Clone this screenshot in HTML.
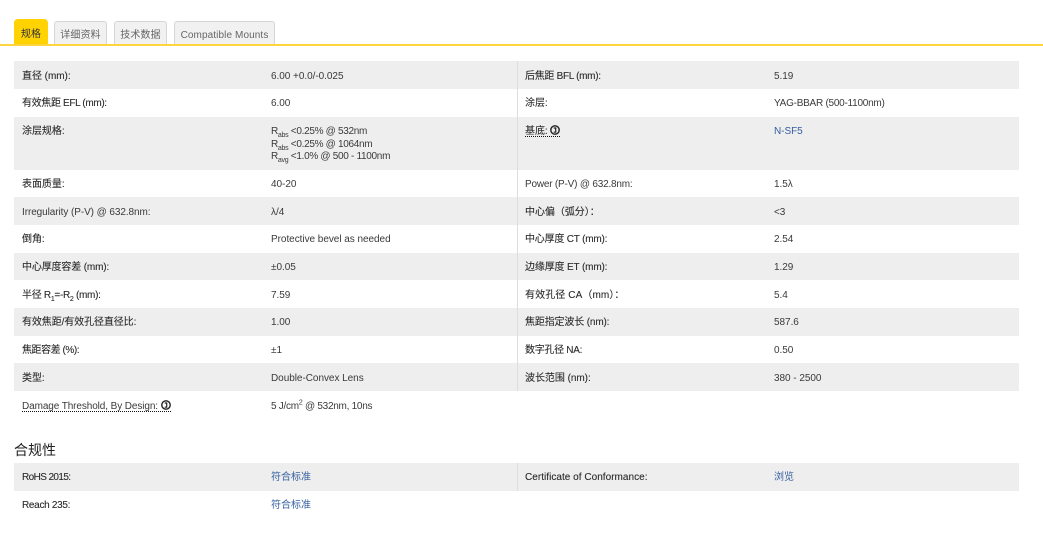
<!DOCTYPE html>
<html lang="zh"><head><meta charset="utf-8"><style>
html,body{margin:0;padding:0;background:#fff}
body{width:1043px;height:537px;position:relative;overflow:hidden;font-family:"Liberation Sans","Noto Sans CJK SC",sans-serif;font-size:10px;color:#3a3a3a}
.tab{position:absolute;box-sizing:border-box;top:21px;height:24px;background:#f1f1f1;border:1px solid #d6d6d6;border-bottom:0;border-radius:3px 3px 0 0;line-height:28px;text-align:center;color:#666;letter-spacing:.1px}
.on{top:19px;height:26px;background:#ffd200;border:0;color:#333;line-height:31px;border-radius:4px 4px 0 0}
.line{position:absolute;left:0;top:44px;width:1043px;height:2px;background:#ffd53c}
.g{position:absolute;left:14px;width:1005px;background:#eee}
.d{position:absolute;left:517px;width:1px;background:#ddd}
.t{position:absolute;white-space:nowrap;line-height:14px;letter-spacing:-.04px}
.c{color:#2a2a2a;-webkit-text-stroke:.1px #2a2a2a}
.b{color:#345f9f}
sub,sup{font-size:7px;line-height:0}
.u{display:inline-block;height:11px;border-bottom:1px dotted #111}
.i{display:inline-block;width:10px;height:10px;vertical-align:-1px;-webkit-text-stroke:0}
h3{position:absolute;margin:0;left:14px;top:441px;font-size:14px;line-height:18px;font-weight:400;color:#222;font-family:"Noto Sans CJK SC","Liberation Sans",sans-serif}
</style></head><body>
<div class="tab on" style="left:14px;width:34px">规格</div>
<div class="tab" style="left:54px;width:53px">详细资料</div>
<div class="tab" style="left:114px;width:53px">技术数据</div>
<div class="tab" style="left:174px;width:101px">Compatible Mounts</div>
<div class="line"></div>

<div class="g" style="top:61px;height:28px"></div>
<div class="g" style="top:117px;height:53px"></div>
<div class="g" style="top:197px;height:28px"></div>
<div class="g" style="top:253px;height:27px"></div>
<div class="g" style="top:308px;height:28px"></div>
<div class="g" style="top:363px;height:28px"></div>
<div class="g" style="top:463px;height:28px"></div>
<div class="d" style="top:61px;height:330px"></div>
<div class="d" style="top:463px;height:28px"></div>

<div class="t c" style="left:22px;top:70px">直径 (mm):</div>
<div class="t" style="left:271px;top:70px">6.00 +0.0/-0.025</div>
<div class="t c" style="left:525px;top:70px;letter-spacing:-.3px">后焦距 BFL (mm):</div>
<div class="t" style="left:774px;top:70px">5.19</div>

<div class="t c" style="left:22px;top:97px;letter-spacing:-.35px">有效焦距 EFL (mm):</div>
<div class="t" style="left:271px;top:97px">6.00</div>
<div class="t c" style="left:525px;top:97px">涂层:</div>
<div class="t" style="left:774px;top:97px;letter-spacing:-.25px">YAG-BBAR (500-1100nm)</div>

<div class="t c" style="left:22px;top:125px">涂层规格:</div>
<div class="t" style="left:271px;top:126px;line-height:12.5px;letter-spacing:-.3px">R<sub>abs</sub> &lt;0.25% @ 532nm<br>R<sub>abs</sub> &lt;0.25% @ 1064nm<br>R<sub>avg</sub> &lt;1.0% @ 500 - 1100nm</div>
<div class="t c" style="left:525px;top:125px"><span class="u">基底: <svg class="i" viewBox="0 0 10 10"><circle cx="5" cy="5" r="4.2" fill="none" stroke="#222" stroke-width="1.4"/><path d="M3.7 3h2v4.2M3.7 7.2h2.6" fill="none" stroke="#222" stroke-width="1.2"/></svg></span></div>
<div class="t b" style="left:774px;top:125px">N-SF5</div>

<div class="t c" style="left:22px;top:178px">表面质量:</div>
<div class="t" style="left:271px;top:178px">40-20</div>
<div class="t" style="left:525px;top:178px;letter-spacing:-.2px">Power (P-V) @ 632.8nm:</div>
<div class="t" style="left:774px;top:178px">1.5λ</div>

<div class="t" style="left:22px;top:206px;letter-spacing:-.08px">Irregularity (P-V) @ 632.8nm:</div>
<div class="t" style="left:271px;top:206px">λ/4</div>
<div class="t c" style="left:525px;top:206px">中心偏（弧分）：</div>
<div class="t" style="left:774px;top:206px">&lt;3</div>

<div class="t c" style="left:22px;top:233px">倒角:</div>
<div class="t" style="left:271px;top:233px">Protective bevel as needed</div>
<div class="t c" style="left:525px;top:233px;letter-spacing:-.2px">中心厚度 CT (mm):</div>
<div class="t" style="left:774px;top:233px">2.54</div>

<div class="t c" style="left:22px;top:261px;letter-spacing:-.15px">中心厚度容差 (mm):</div>
<div class="t" style="left:271px;top:261px">±0.05</div>
<div class="t c" style="left:525px;top:261px;letter-spacing:-.15px">边缘厚度 ET (mm):</div>
<div class="t" style="left:774px;top:261px">1.29</div>

<div class="t c" style="left:22px;top:289px;letter-spacing:-.3px">半径 R<sub>1</sub>=-R<sub>2</sub> (mm):</div>
<div class="t" style="left:271px;top:289px">7.59</div>
<div class="t c" style="left:525px;top:289px;letter-spacing:.1px">有效孔径 CA（mm）：</div>
<div class="t" style="left:774px;top:289px">5.4</div>

<div class="t c" style="left:22px;top:316px;letter-spacing:-.1px">有效焦距/有效孔径直径比:</div>
<div class="t" style="left:271px;top:316px">1.00</div>
<div class="t c" style="left:525px;top:316px;letter-spacing:-.15px">焦距指定波长 (nm):</div>
<div class="t" style="left:774px;top:316px">587.6</div>

<div class="t c" style="left:22px;top:344px;letter-spacing:-.45px">焦距容差 (%):</div>
<div class="t" style="left:271px;top:344px">±1</div>
<div class="t c" style="left:525px;top:344px;letter-spacing:-.3px">数字孔径 NA:</div>
<div class="t" style="left:774px;top:344px">0.50</div>

<div class="t c" style="left:22px;top:372px">类型:</div>
<div class="t" style="left:271px;top:372px">Double-Convex Lens</div>
<div class="t c" style="left:525px;top:372px">波长范围 (nm):</div>
<div class="t" style="left:774px;top:372px">380 - 2500</div>

<div class="t" style="left:22px;top:400px;letter-spacing:-.1px"><span class="u">Damage Threshold, By Design: <svg class="i" viewBox="0 0 10 10"><circle cx="5" cy="5" r="4.2" fill="none" stroke="#222" stroke-width="1.4"/><path d="M3.7 3h2v4.2M3.7 7.2h2.6" fill="none" stroke="#222" stroke-width="1.2"/></svg></span></div>
<div class="t" style="left:271px;top:400px;letter-spacing:-.27px">5 J/cm<sup>2</sup> @ 532nm, 10ns</div>

<h3>合规性</h3>

<div class="t c" style="left:22px;top:471px;letter-spacing:-.6px">RoHS 2015:</div>
<div class="t b" style="left:271px;top:471px;letter-spacing:0">符合标准</div>
<div class="t c" style="left:525px;top:471px;letter-spacing:.03px">Certificate of Conformance:</div>
<div class="t b" style="left:774px;top:471px;letter-spacing:0">浏览</div>
<div class="t c" style="left:22px;top:499px;letter-spacing:-.3px">Reach 235:</div>
<div class="t b" style="left:271px;top:499px;letter-spacing:0">符合标准</div>
</body></html>
